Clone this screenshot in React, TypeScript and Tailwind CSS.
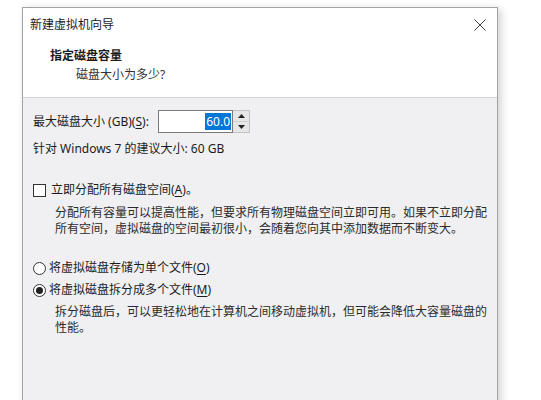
import React from "react";

const font = {
  fontFamily: '"Segoe UI", "Noto Sans", "Noto Sans CJK SC", sans-serif',
};

function Key({ k }: { k: string }) {
  return <span className="underline underline-offset-2">{k}</span>;
}

export default function App() {
  return (
    <div
      className="w-[541px] h-[400px] overflow-hidden bg-white text-[12px] text-[#1b1b1b]"
      style={font}
    >
      <div className="ml-[22px] mt-[7px] w-[476px] h-[420px] border border-[#a3a3a3] bg-[#f0f0f2] shadow-[3px_2px_8px_rgba(0,0,0,0.18)] flex flex-col">
        {/* title + header */}
        <div className="bg-white border-b border-[#d4d4d4]">
          <div className="h-[32px] flex items-center justify-between pl-[7px] pr-[11px] pt-[1px]">
            <span className="text-[12px]">新建虚拟机向导</span>
            <svg width="12" height="12" viewBox="0 0 12 12" className="text-[#444]">
              <path d="M0.5 0.5 L11.5 11.5 M11.5 0.5 L0.5 11.5" stroke="currentColor" strokeWidth="1" fill="none" />
            </svg>
          </div>
          <div className="pl-[27px] pt-[6px] pb-[13px] leading-[19px]">
            <div className="font-bold">指定磁盘容量</div>
            <div className="pl-[26px] text-[#333]">磁盘大小为多少?</div>
          </div>
        </div>

        {/* body */}
        <div className="pl-[10px] pr-[10px] pt-[12px]">
          <div className="flex items-center h-[23px]">
            <span className="w-[125px]">
              最大磁盘大小 (GB)(<Key k="S" />):
            </span>
            <div className="flex h-[23px]">
              <div className="w-[75px] h-[23px] bg-white border border-[#7a7a7a] flex items-center justify-end pr-[1px]">
                <span className="bg-[#0078d7] text-white leading-[17px] px-[1px]">60.0</span>
              </div>
              <div className="w-[17px] h-[23px] flex flex-col bg-[#e6e6e6] border-y border-r border-[#c4c4c4]">
                <div className="flex-1 flex items-center justify-center border-b border-[#d0d0d0]">
                  <svg width="7" height="4" viewBox="0 0 7 4">
                    <path d="M0 4 L3.5 0 L7 4 Z" fill="#222" />
                  </svg>
                </div>
                <div className="flex-1 flex items-center justify-center">
                  <svg width="7" height="4" viewBox="0 0 7 4">
                    <path d="M0 0 L3.5 4 L7 0 Z" fill="#222" />
                  </svg>
                </div>
              </div>
            </div>
          </div>

          <div className="mt-[8px] leading-[16px]">针对 Windows 7 的建议大小: 60 GB</div>

          <div className="mt-[25px] flex items-center gap-[5px] leading-[16px]">
            <span className="w-[13px] h-[13px] border border-[#333] bg-white" />
            <span>
              立即分配所有磁盘空间(<Key k="A" />)。
            </span>
          </div>
          <div className="mt-[7px] pl-[22px] leading-[16px] text-[#2b2b2b]">
            <div>分配所有容量可以提高性能，但要求所有物理磁盘空间立即可用。如果不立即分配</div>
            <div>所有空间，虚拟磁盘的空间最初很小，会随着您向其中添加数据而不断变大。</div>
          </div>

          <div className="mt-[23px] flex items-center gap-[3px] leading-[16px]">
            <span className="w-[13px] h-[13px] rounded-full border border-[#333] bg-white" />
            <span>
              将虚拟磁盘存储为单个文件(<Key k="O" />)
            </span>
          </div>
          <div className="mt-[6px] flex items-center gap-[3px] leading-[16px]">
            <span className="w-[13px] h-[13px] rounded-full border border-[#333] bg-white flex items-center justify-center">
              <span className="w-[7px] h-[7px] rounded-full bg-[#222]" />
            </span>
            <span>
              将虚拟磁盘拆分成多个文件(<Key k="M" />)
            </span>
          </div>
          <div className="mt-[6px] pl-[22px] leading-[16px] text-[#2b2b2b]">
            <div>拆分磁盘后，可以更轻松地在计算机之间移动虚拟机，但可能会降低大容量磁盘的</div>
            <div>性能。</div>
          </div>
        </div>
      </div>
    </div>
  );
}
